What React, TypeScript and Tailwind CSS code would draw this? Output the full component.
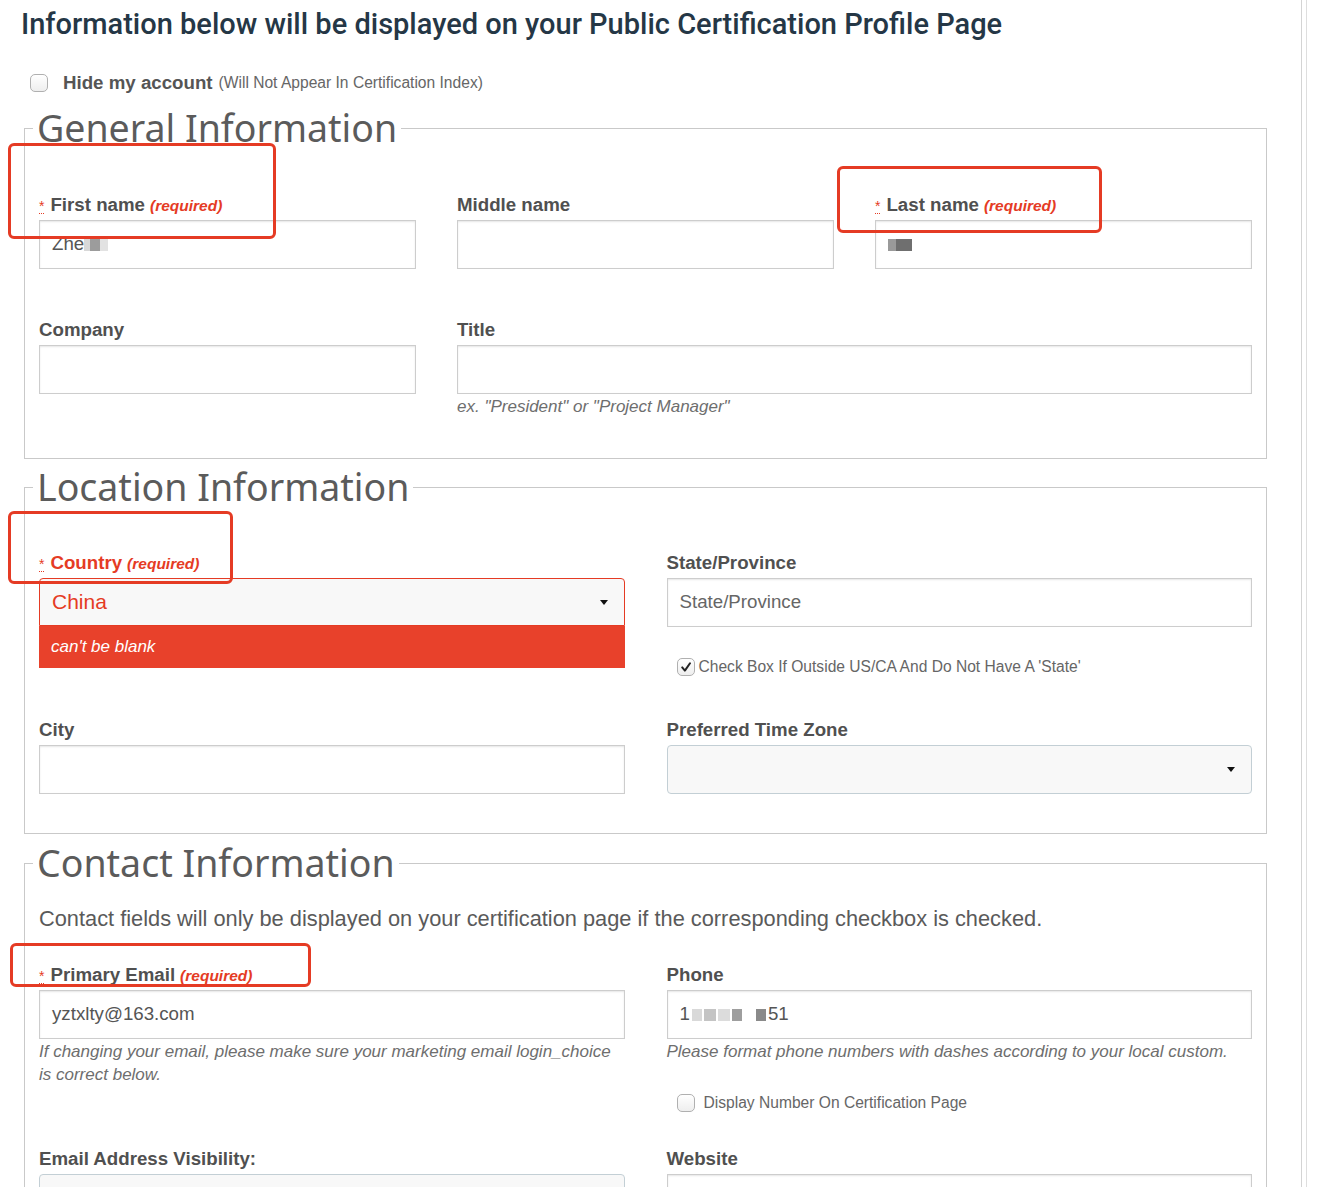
import React from "react";

const RED = "#e53b24";

function Label({
  children,
  required,
  error,
}: {
  children: React.ReactNode;
  required?: boolean;
  error?: boolean;
}) {
  return (
    <div
      className={`flex h-[22px] items-baseline text-[18.7px] font-bold leading-[22px] ${
        error ? "text-[#e53b24]" : "text-[#505050]"
      }`}
    >
      {required && (
        <abbr
          title="required"
          className="mr-[6px] border-b border-dotted border-[#e53b24] text-[14px] font-normal leading-[13px] text-[#e53b24] no-underline"
        >
          *
        </abbr>
      )}
      <span>{children}</span>
      {required && <em className="ml-[5px] text-[15.5px] text-[#e53b24]">(required)</em>}
    </div>
  );
}

function Box({ children, className = "" }: { children?: React.ReactNode; className?: string }) {
  return (
    <div
      className={`mt-[4px] flex h-[49px] w-full items-center border border-[#cdcdcd] bg-white px-[12px] text-[18.7px] text-[#555] shadow-[inset_0_1px_2px_rgba(0,0,0,0.1)] ${className}`}
    >
      {children}
    </div>
  );
}

function Caret() {
  return (
    <svg viewBox="0 0 8 5" className="h-[5px] w-[8px]">
      <polygon points="0,0 8,0 4,5" fill="#111" />
    </svg>
  );
}

function Select({ children }: { children?: React.ReactNode }) {
  return (
    <div className="mt-[4px] flex h-[49px] w-full items-center justify-between rounded-[4px] border border-[#c3cfd5] bg-[#f8f8f8] pl-[12px] pr-[16px] text-[18.7px] text-[#555]">
      <span>{children}</span>
      <Caret />
    </div>
  );
}

function Check({ checked }: { checked?: boolean }) {
  return (
    <span className="flex h-[18px] w-[18px] shrink-0 items-center justify-center rounded-[5px] border border-[#b0b0b0] bg-linear-to-b from-white to-[#eeeeee]">
      {checked && (
        <svg viewBox="0 0 12 12" className="h-[12px] w-[12px]">
          <path d="M2.2 6.4 L4.9 9.6 L10 2.2" fill="none" stroke="#222" strokeWidth="2" strokeLinecap="round" strokeLinejoin="round" />
        </svg>
      )}
    </span>
  );
}

function Hint({ children }: { children: React.ReactNode }) {
  return <p className="mt-[1px] text-[17px] italic leading-[23px] text-[#6e6e6e]">{children}</p>;
}

function Redacted({ w, tone = "bg-[#b5b5b5]" }: { w: number; tone?: string }) {
  return <span className={`inline-block h-[12px] ${tone}`} style={{ width: w }} />;
}

function Legend({ children }: { children: React.ReactNode }) {
  return (
    <legend className="-ml-[6px] px-[4px] font-['Noto_Sans',sans-serif] text-[37.5px] leading-[46px] text-[#5b5b5b]">
      {children}
    </legend>
  );
}

const fieldset = "ml-[24px] w-[1243px] border border-[#c9c9c9] px-[14px]";

const marks = [
  "left-[8px] top-[143px] h-[96px] w-[268px]",
  "left-[837px] top-[166px] h-[67px] w-[265px]",
  "left-[8px] top-[511px] h-[73px] w-[225px]",
  "left-[10px] top-[943px] h-[44px] w-[301px]",
];

export default function App() {
  return (
    <div className="relative flex bg-white font-['Liberation_Sans',Arial,sans-serif]">
      <div className="w-[1302px] border-r border-[#d4d4d4] pb-[40px]">
        <h1 className="pl-[21px] pt-[7px] font-['Roboto',sans-serif] text-[29px] font-medium leading-[34px] text-[#253746]">
          Information below will be displayed on your Public Certification Profile Page
        </h1>

        <label className="ml-[30px] mt-[32px] flex h-[20px] items-center gap-[15px]">
          <Check />
          <span className="text-[18.7px] font-bold text-[#555]">Hide my account</span>
          <span className="-ml-[9px] text-[15.6px] text-[#666]">(Will Not Appear In Certification Index)</span>
        </label>

        {/* General */}
        <fieldset className={`${fieldset} mt-[12px] pb-[40px] pt-[43px]`}>
          <Legend>General Information</Legend>
          <div className="grid grid-cols-3 gap-x-[41px]">
            <div>
              <Label required>First name</Label>
              <Box>
                <span>Zhe</span>
                <Redacted w={6} tone="bg-[#d8d8d8]" />
                <Redacted w={10} tone="bg-[#9c9c9c]" />
                <Redacted w={8} tone="bg-[#e2e2e2]" />
              </Box>
            </div>
            <div>
              <Label>Middle name</Label>
              <Box />
            </div>
            <div>
              <Label required>Last name</Label>
              <Box>
                <Redacted w={8} tone="bg-[#9a9a9a]" />
                <Redacted w={16} tone="bg-[#6f6f6f]" />
              </Box>
            </div>
          </div>
          <div className="mt-[50px] grid grid-cols-3 gap-x-[41px]">
            <div>
              <Label>Company</Label>
              <Box />
            </div>
            <div className="col-span-2">
              <Label>Title</Label>
              <Box />
              <Hint>ex. "President" or "Project Manager"</Hint>
            </div>
          </div>
        </fieldset>

        {/* Location */}
        <fieldset className={`${fieldset} mt-[5px] pb-[39px] pt-[42px]`}>
          <Legend>Location Information</Legend>
          <div className="grid grid-cols-2 items-start gap-x-[42px]">
            <div>
              <Label required error>
                Country
              </Label>
              <div className="mt-[4px] flex h-[48px] items-center justify-between rounded-t-[4px] border border-[#e53b24] bg-[#f8f8f8] pl-[12px] pr-[16px] text-[21px] text-[#e53b24]">
                <span>China</span>
                <Caret />
              </div>
              <div className="flex h-[42px] items-center bg-[#e8412b] px-[12px] text-[17px] italic text-white">
                can't be blank
              </div>
            </div>
            <div>
              <Label>State/Province</Label>
              <Box className="h-[48px] text-[#666]">State/Province</Box>
              <label className="ml-[10px] mt-[31px] flex h-[18px] items-center gap-[4px] text-[15.6px] text-[#666]">
                <Check checked />
                Check Box If Outside US/CA And Do Not Have A 'State'
              </label>
            </div>
          </div>
          <div className="mt-[43px] grid grid-cols-2 gap-x-[42px]">
            <div>
              <Label>City</Label>
              <Box className="h-[48px]" />
            </div>
            <div>
              <Label>Preferred Time Zone</Label>
              <Select />
            </div>
          </div>
        </fieldset>

        {/* Contact */}
        <fieldset className={`${fieldset} mt-[6px] pb-[40px] pt-[21px]`}>
          <Legend>Contact Information</Legend>
          <p className="text-[21.8px] leading-[24px] text-[#5a5a5a]">
            Contact fields will only be displayed on your certification page if the corresponding checkbox is checked.
          </p>
          <div className="mt-[33px] grid grid-cols-2 items-start gap-x-[42px]">
            <div>
              <Label required>Primary Email</Label>
              <Box className="h-[48px]">yztxlty@163.com</Box>
              <Hint>If changing your email, please make sure your marketing email login_choice is correct below.</Hint>
            </div>
            <div>
              <Label>Phone</Label>
              <Box className="h-[48px] gap-[2px]">
                <span>1</span>
                <Redacted w={10} tone="bg-[#d9d9d9]" />
                <Redacted w={12} tone="bg-[#c4c4c4]" />
                <Redacted w={12} tone="bg-[#dcdcdc]" />
                <Redacted w={10} tone="bg-[#9e9e9e]" />
                <span className="ml-[10px]" />
                <Redacted w={10} tone="bg-[#8a8a8a]" />
                <span>51</span>
              </Box>
              <Hint>Please format phone numbers with dashes according to your local custom.</Hint>
              <label className="ml-[10px] mt-[31px] flex h-[18px] items-center gap-[9px] text-[15.6px] text-[#666]">
                <Check />
                Display Number On Certification Page
              </label>
            </div>
          </div>
          <div className="mt-[36px] grid grid-cols-2 gap-x-[42px]">
            <div>
              <Label>Email Address Visibility:</Label>
              <Select />
            </div>
            <div>
              <Label>Website</Label>
              <Box className="h-[48px]" />
            </div>
          </div>
        </fieldset>
      </div>
      <div className="w-[5px] border-r border-[#dedede]" />

      {marks.map((m) => (
        <div key={m} className={`pointer-events-none absolute rounded-[6px] border-[3px] border-[${RED}] ${m}`} />
      ))}
    </div>
  );
}
